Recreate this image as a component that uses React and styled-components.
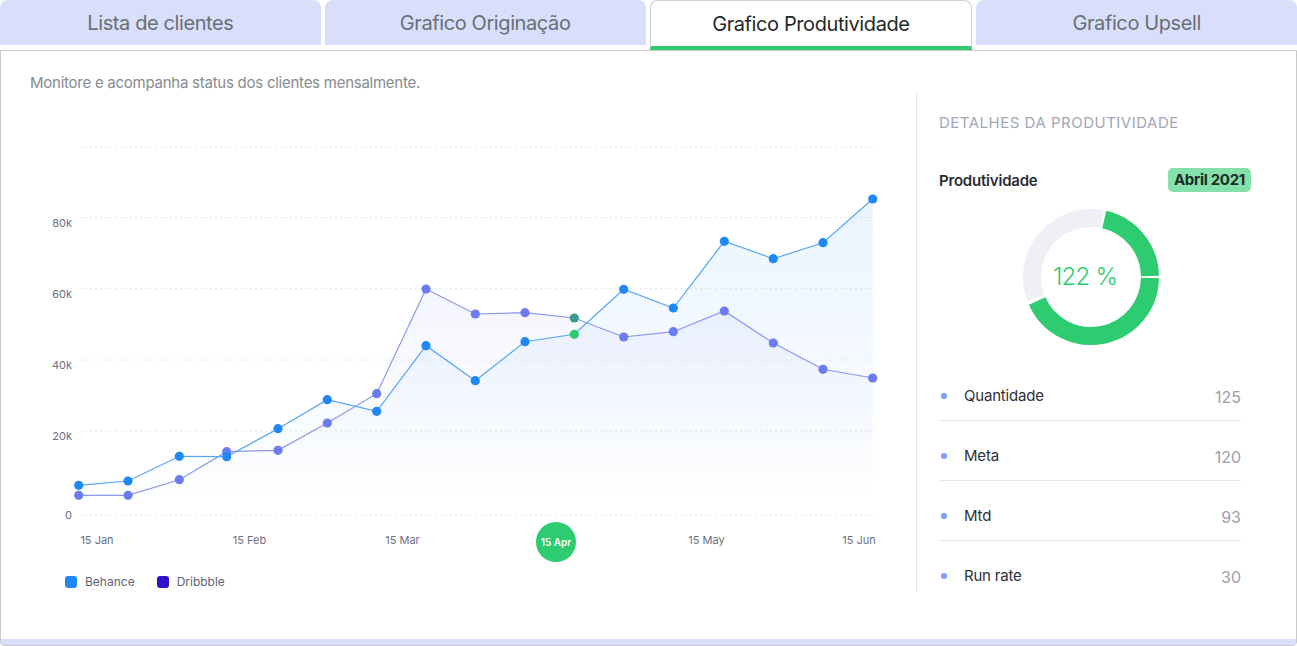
import React from 'react';
import styled, { createGlobalStyle } from 'styled-components';

const GlobalStyle = createGlobalStyle`
    * { box-sizing: border-box; }
    body {
        margin: 0;
        background: #fff;
        font-family: Inter, "Noto Sans", "Liberation Sans", sans-serif;
        color: #2b2b33;
    }
`;

const Page = styled.div`
    width: 1297px;
    height: 646px;
    display: flex;
    flex-direction: column;
`;

const TabBar = styled.div`
    display: flex;
    gap: 4px;
    height: 50px;
    align-items: flex-start;
`;

const Tab = styled.div`
    flex: 1;
    height: ${p => (p.$active ? '50px' : '45px')};
    display: flex;
    align-items: center;
    justify-content: center;
    border-radius: 8px 8px 0 0;
    font-size: 20px;
    letter-spacing: -0.4px;
    background: ${p => (p.$active ? '#fff' : '#d9defa')};
    color: ${p => (p.$active ? '#1f2a27' : '#687076')};
    border: ${p => (p.$active ? '1px solid #cfcfcf' : 'none')};
    border-bottom: ${p => (p.$active ? '4px solid #2ecc71' : 'none')};
    cursor: pointer;
`;

const Panel = styled.div`
    flex: 1;
    display: flex;
    flex-direction: column;
    border: 1px solid #c9c9c9;
    border-radius: 0 0 4px 4px;
    overflow: hidden;
`;

const Body = styled.div`
    flex: 1;
    display: flex;
`;

const BottomStrip = styled.div`
    height: 6px;
    background: #d9defa;
`;

const ChartColumn = styled.div`
    width: 915px;
    padding: 23px 0 0 29px;
    display: flex;
    flex-direction: column;
`;

const Subtitle = styled.p`
    margin: 0;
    font-size: 15px;
    line-height: 18px;
    color: #868c90;
    letter-spacing: -0.25px;
    height: 56px;
`;

const Legend = styled.div`
    display: flex;
    align-items: center;
    gap: 22px;
    padding-left: 35px;
    margin-top: 6px;
`;

const LegendItem = styled.div`
    display: flex;
    align-items: center;
    gap: 8px;
    font-size: 12px;
    color: #5f6472;

    &::before {
        content: '';
        width: 12px;
        height: 12px;
        border-radius: 3px;
        background: ${p => p.$color};
    }
`;

const DetailColumn = styled.div`
    flex: 1;
    margin-top: 41px;
    height: 500px;
    border-left: 1px solid #e6e6e9;
    padding: 22px 45px 0 22px;
    display: flex;
    flex-direction: column;
`;

const DetailTitle = styled.h3`
    margin: 0;
    font-size: 15px;
    font-weight: 400;
    line-height: 18px;
    letter-spacing: 0.5px;
    text-transform: uppercase;
    color: #a3a6b4;
`;

const HeaderRow = styled.div`
    display: flex;
    align-items: center;
    justify-content: space-between;
    margin-top: 36px;
    height: 24px;
`;

const Label = styled.span`
    font-size: 15px;
    font-weight: 600;
    color: #2b2b33;
    letter-spacing: -0.2px;
`;

const Badge = styled.span`
    background: #84e1a9;
    color: #1f2a27;
    font-size: 15px;
    font-weight: 700;
    letter-spacing: -0.3px;
    padding: 3px 6px;
    border-radius: 5px;
    line-height: 18px;
`;

const DonutWrap = styled.div`
    display: flex;
    padding-left: 82px;
    margin-top: 15px;
`;

const StatList = styled.ul`
    list-style: none;
    margin: 14px 10px 0 0;
    padding: 0;
`;

const StatRow = styled.li`
    height: 60px;
    display: flex;
    align-items: flex-start;
    padding-top: 26px;
    border-bottom: 1px solid #e2e4ee;

    &:last-child {
        border-bottom: none;
    }
`;

const Dot = styled.span`
    width: 6px;
    height: 6px;
    border-radius: 50%;
    background: #7c9cf5;
    margin: 6px 17px 0 2px;
`;

const StatName = styled.span`
    flex: 1;
    font-size: 15px;
    line-height: 18px;
    color: #2f3036;
    letter-spacing: -0.2px;
`;

const StatValue = styled.span`
    font-size: 16px;
    line-height: 18px;
    padding-top: 1px;
    color: #9c9eae;
`;

const xs = [78.7, 128, 179.3, 226.7, 278, 327.3, 376.7, 426, 475.3, 525, 574.3, 623.7, 673.3, 724.3, 773.3, 823, 872.7];
const behance = [485.3, 481, 456.3, 456.7, 428.7, 399.7, 411.3, 345.7, 380.7, 341.7, 334.3, 289.3, 308, 241.3, 258.7, 242.7, 199];
const dribbble = [495.3, 495.3, 479.7, 451.7, 450.3, 423, 393.7, 289, 314, 312.7, 318, 337, 331.7, 311, 343, 369.3, 378];
const grid = [
    { y: 147, label: '', dy: 0 },
    { y: 217.5, label: '80k', dy: 9 },
    { y: 288.7, label: '60k', dy: 9 },
    { y: 360, label: '40k', dy: 9 },
    { y: 431, label: '20k', dy: 9 },
    { y: 515, label: '0', dy: 4 }
];
const months = [
    { x: 97, label: '15 Jan' },
    { x: 249.5, label: '15 Feb' },
    { x: 402.5, label: '15 Mar' },
    { x: 706.5, label: '15 May' },
    { x: 859, label: '15 Jun' }
];
const stats = [
    { name: 'Quantidade', value: 125 },
    { name: 'Meta', value: 120 },
    { name: 'Mtd', value: 93 },
    { name: 'Run rate', value: 30 }
];

const linePath = ys => ys.map((y, i) => `${i ? 'L' : 'M'}${xs[i]} ${y}`).join(' ');
const areaPath = ys => `${linePath(ys)} L${xs[xs.length - 1]} 515 L${xs[0]} 515 Z`;

const Chart = function Chart() {
    return (
        <svg width="860" height="438" viewBox="30 130 860 438">
            <defs>
                <linearGradient id="fillB" gradientUnits="userSpaceOnUse" x1="0" y1="200" x2="0" y2="505">
                    <stop offset="0" stopColor="#1e88f5" stopOpacity="0.09" />
                    <stop offset="0.55" stopColor="#1e88f5" stopOpacity="0.045" />
                    <stop offset="1" stopColor="#1e88f5" stopOpacity="0" />
                </linearGradient>
                <linearGradient id="fillD" gradientUnits="userSpaceOnUse" x1="0" y1="290" x2="0" y2="500">
                    <stop offset="0" stopColor="#6a7cf0" stopOpacity="0.07" />
                    <stop offset="0.6" stopColor="#6a7cf0" stopOpacity="0.025" />
                    <stop offset="1" stopColor="#6a7cf0" stopOpacity="0" />
                </linearGradient>
            </defs>
            {grid.map(g => (
                <g key={g.y}>
                    <line x1="80" x2="876" y1={g.y} y2={g.y} stroke="#e4e6ee" strokeWidth="1" strokeDasharray="2 3" />
                    {g.label && (
                        <text x="72" y={g.y + g.dy} textAnchor="end" fontSize="11" fill="#6b7080" fontFamily="Inter, sans-serif">{g.label}</text>
                    )}
                </g>
            ))}
            <path d={areaPath(behance)} fill="url(#fillB)" />
            <path d={areaPath(dribbble)} fill="url(#fillD)" />
            <path d={linePath(dribbble)} fill="none" stroke="#8a97f2" strokeWidth="1.2" />
            <path d={linePath(behance)} fill="none" stroke="#55a5f6" strokeWidth="1.2" />
            {xs.map((x, i) => (
                <circle key={'d' + i} cx={x} cy={dribbble[i]} r="4.6" fill={i === 10 ? '#3b9a8c' : '#6a7cf0'} />
            ))}
            {xs.map((x, i) => (
                <circle key={'b' + i} cx={x} cy={behance[i]} r="4.6" fill={i === 10 ? '#2ecc71' : '#1e88f5'} />
            ))}
            {months.map(m => (
                <text key={m.label} x={m.x} y="544" textAnchor="middle" fontSize="11" fill="#6b7080" fontFamily="Inter, sans-serif">{m.label}</text>
            ))}
            <circle cx="556" cy="542" r="20" fill="#2ecc71" />
            <text x="556" y="546" textAnchor="middle" fontSize="10" fontWeight="600" fill="#fff" fontFamily="Inter, sans-serif">15 Apr</text>
        </svg>
    );
};

const polar = (a, r) => {
    const rad = (a * Math.PI) / 180;
    return [70 + r * Math.sin(rad), 70 - r * Math.cos(rad)];
};
const arc = (a0, a1, r) => {
    const [x0, y0] = polar(a0, r);
    const [x1, y1] = polar(a1, r);
    const large = a1 - a0 > 180 ? 1 : 0;
    return `M${x0.toFixed(2)} ${y0.toFixed(2)} A${r} ${r} 0 ${large} 1 ${x1.toFixed(2)} ${y1.toFixed(2)}`;
};

const Donut = function Donut({ value }) {
    return (
        <svg width="140" height="140" viewBox="0 0 140 140">
            <path d={arc(249, 371, 59)} fill="none" stroke="#eff0f6" strokeWidth="18" />
            <path d={arc(13, 89, 59)} fill="none" stroke="#2ecc71" strokeWidth="18" />
            <path d={arc(91, 246, 59)} fill="none" stroke="#2ecc71" strokeWidth="18" />
            <text x="64" y="78" textAnchor="middle" fontSize="24" fontWeight="300" fill="#2ecc71" letterSpacing="-0.8" fontFamily="Inter, sans-serif">{value} %</text>
        </svg>
    );
};

const tabs = ['Lista de clientes', 'Grafico Originação', 'Grafico Produtividade', 'Grafico Upsell'];

export default function App() {
    return (
        <Page>
            <GlobalStyle />
            <TabBar>
                {tabs.map((t, i) => (
                    <Tab key={t} $active={i === 2}>{t}</Tab>
                ))}
            </TabBar>
            <Panel>
                <Body>
                    <ChartColumn>
                        <Subtitle>Monitore e acompanha status dos clientes mensalmente.</Subtitle>
                        <Chart />
                        <Legend>
                            <LegendItem $color="#1e88f5">Behance</LegendItem>
                            <LegendItem $color="#3312c8">Dribbble</LegendItem>
                        </Legend>
                    </ChartColumn>
                    <DetailColumn>
                        <DetailTitle>Detalhes da produtividade</DetailTitle>
                        <HeaderRow>
                            <Label>Produtividade</Label>
                            <Badge>Abril 2021</Badge>
                        </HeaderRow>
                        <DonutWrap>
                            <Donut value={122} />
                        </DonutWrap>
                        <StatList>
                            {stats.map(s => (
                                <StatRow key={s.name}>
                                    <Dot />
                                    <StatName>{s.name}</StatName>
                                    <StatValue>{s.value}</StatValue>
                                </StatRow>
                            ))}
                        </StatList>
                    </DetailColumn>
                </Body>
                <BottomStrip />
            </Panel>
        </Page>
    );
}
